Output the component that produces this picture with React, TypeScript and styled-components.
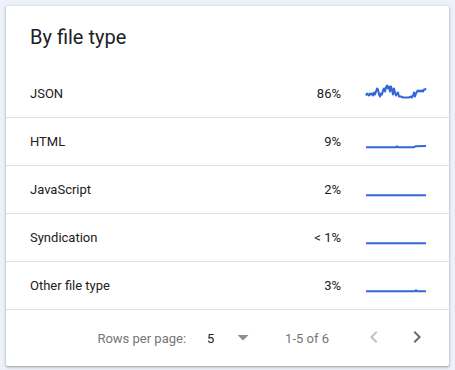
import React from "react";
import styled, { createGlobalStyle } from "styled-components";

const GlobalStyle = createGlobalStyle`
  html, body {
    margin: 0;
    padding: 0;
    background: #eef1fa;
  }
  body {
    padding: 6px;
    font-family: Roboto, "Liberation Sans", Arial, sans-serif;
    -webkit-font-smoothing: antialiased;
  }
`;

const Card = styled.section`
  width: 443px;
  height: 360px;
  box-sizing: border-box;
  background: #ffffff;
  border-radius: 2px;
  box-shadow: 0 1px 2px rgba(60, 64, 67, 0.3), 0 1px 3px 1px rgba(60, 64, 67, 0.15);
  display: flex;
  flex-direction: column;
  overflow: hidden;
`;

const Header = styled.header`
  height: 64px;
  box-sizing: border-box;
  padding: 17px 24px 0;
`;

const Title = styled.h2`
  margin: 0;
  font-size: 20px;
  line-height: 28px;
  font-weight: 400;
  color: #202124;
`;

const Row = styled.div`
  height: 48px;
  box-sizing: border-box;
  border-bottom: 1px solid #e0e0e0;
  padding: 0 23px 0 24px;
  display: flex;
  align-items: center;
  font-size: 13px;
  color: #212121;
`;

const Name = styled.span`
  flex: 1;
`;

const Percent = styled.span`
  text-align: right;
`;

const Spark = styled.svg`
  width: 60px;
  height: 24px;
  margin-left: 25px;
  display: block;
  overflow: visible;
`;

const Footer = styled.footer`
  height: 56px;
  display: flex;
  align-items: center;
  justify-content: flex-end;
  padding-right: 20px;
  font-size: 13px;
  color: #757575;
`;

const Label = styled.span`
  margin-right: 21px;
`;

const Select = styled.div`
  width: 42px;
  display: flex;
  align-items: center;
  justify-content: space-between;
  color: #212121;
`;

const Range = styled.span`
  margin-left: 36px;
  margin-right: 33px;
`;

const IconButton = styled.button<{ $disabled?: boolean }>`
  width: 24px;
  height: 24px;
  padding: 0;
  border: 0;
  background: none;
  margin-bottom: 3px;
  color: ${(p) => (p.$disabled ? "#c2c2c2" : "#6b6b6b")};
  display: flex;
  align-items: center;
  justify-content: center;
  & + & {
    margin-left: 19px;
  }
`;

const TOP = 81.5;
const jsonPts: [number, number][] = [
  [0, 95], [1, 93], [2, 94], [3, 95], [4, 93], [5, 94], [6, 93], [7, 95], [8, 92], [9, 94],
  [10, 91], [11, 88], [12, 89], [13, 94], [14, 96], [15, 93], [16, 94], [17, 90], [18, 88],
  [19, 91], [20, 87], [21, 85], [22, 88], [23, 86], [24, 91], [25, 86], [26, 89], [27, 94],
  [28, 88], [29, 92], [30, 95], [31, 93], [32, 92], [33, 96], [35, 96], [37, 97], [40, 97],
  [43, 97], [45, 96], [46, 97], [47, 95], [48, 92], [49, 96], [50, 93], [51, 91], [52, 90],
  [53, 91], [54, 90], [55, 91], [56, 90], [57, 91], [58, 89], [59, 89], [60, 88],
];

const toPoints = (pts: [number, number][]) =>
  pts.map(([x, y]) => `${x},${(y - TOP).toFixed(1)}`).join(" ");

const flat = 17.2;
const rows: { name: string; pct: string; points: string }[] = [
  { name: "JSON", pct: "86%", points: toPoints(jsonPts) },
  {
    name: "HTML",
    pct: "9%",
    points: `0,${flat} 30,${flat} 31,${flat - 0.8} 32,${flat} 48,${flat} 50,${flat - 1} 60,${flat - 1.2}`,
  },
  { name: "JavaScript", pct: "2%", points: `0,${flat} 60,${flat}` },
  { name: "Syndication", pct: "< 1%", points: `0,${flat} 60,${flat}` },
  {
    name: "Other file type",
    pct: "3%",
    points: `0,${flat} 49,${flat} 50,${flat - 1} 51,${flat} 60,${flat}`,
  },
];

export default function App() {
  return (
    <>
      <GlobalStyle />
      <Card>
        <Header>
          <Title>By file type</Title>
        </Header>
        {rows.map((r) => (
          <Row key={r.name}>
            <Name>{r.name}</Name>
            <Percent>{r.pct}</Percent>
            <Spark viewBox="0 0 60 24">
              <polyline
                points={r.points}
                fill="none"
                stroke="#3367d6"
                strokeWidth={2}
                strokeLinejoin="round"
                strokeLinecap="butt"
              />
            </Spark>
          </Row>
        ))}
        <Footer>
          <Label>Rows per page:</Label>
          <Select>
            <span>5</span>
            <svg width="12" height="6" viewBox="0 0 12 6">
              <polygon points="0.5,0 11.5,0 6,5.5" fill="#8f8f8f" />
            </svg>
          </Select>
          <Range>1-5 of 6</Range>
          <IconButton $disabled aria-label="Previous page">
            <svg width="24" height="24" viewBox="0 0 24 24">
              <path d="M15.41 7.41L14 6l-6 6 6 6 1.41-1.41L10.83 12z" fill="currentColor" />
            </svg>
          </IconButton>
          <IconButton aria-label="Next page">
            <svg width="24" height="24" viewBox="0 0 24 24">
              <path d="M10 6L8.59 7.41 13.17 12l-4.58 4.59L10 18l6-6z" fill="currentColor" />
            </svg>
          </IconButton>
        </Footer>
      </Card>
    </>
  );
}
